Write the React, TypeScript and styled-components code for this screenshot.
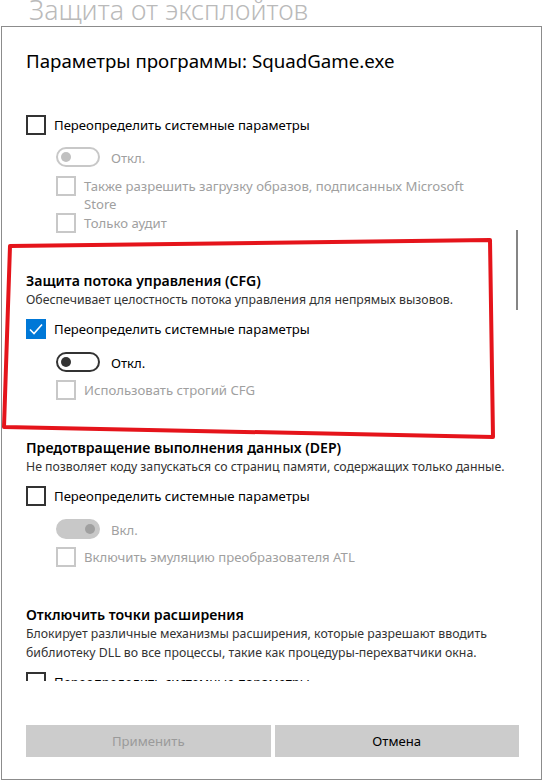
import React from "react";
import styled, { createGlobalStyle } from "styled-components";

const GlobalStyle = createGlobalStyle`
  html, body { margin: 0; padding: 0; background: #ffffff; }
  body { font-family: "Noto Sans", "Open Sans", sans-serif; color: #000; }
  * { box-sizing: border-box; }
`;

const FONT = `"Noto Sans", "Open Sans", sans-serif`;

const Page = styled.div`
  position: relative;
  width: 545px;
  height: 782px;
  overflow: hidden;
  background: #fff;
`;

const PageTitle = styled.div`
  height: 26px;
  overflow: hidden;
  display: flex;
  align-items: flex-end;
  padding-left: 29px;
  font-family: ${FONT};
  font-weight: 300;
  font-size: 26.8px;
  line-height: 30px;
  color: #bababa;
  white-space: nowrap;
  span { margin-bottom: 1px; }
`;

const Dialog = styled.div`
  position: relative;
  margin-left: 1px;
  width: 541px;
  height: 754px;
  border: 1px solid #8c8c8c;
  background: #fff;
  display: flex;
  flex-direction: column;
`;

const DialogTitle = styled.h1`
  margin: 20px 0 0 0;
  padding: 0 24px;
  font-family: ${FONT};
  font-weight: 400;
  font-size: 18.7px;
  line-height: 28px;
  color: #000;
`;

const ScrollArea = styled.div`
  position: relative;
  flex: 1;
  overflow: hidden;
`;

const ScrollContent = styled.div`
  padding: 40px 34px 0 24px;
`;

const ScrollThumb = styled.div`
  position: absolute;
  right: 23px;
  top: 155px;
  width: 2px;
  height: 80px;
  background: #858585;
`;

const Section = styled.section`
  margin-top: 39px;
`;

const Heading = styled.h2`
  margin: 0;
  font-family: ${FONT};
  font-weight: 600;
  font-size: 14.1px;
  line-height: 18px;
  color: #000;
`;

const Description = styled.p`
  margin: 0;
  font-family: ${FONT};
  font-size: 12.3px;
  line-height: 19px;
  color: #333333;
`;

const Row = styled.label<{ $gap?: number }>`
  display: flex;
  align-items: flex-start;
  gap: 8px;
  margin-top: ${(p) => p.$gap ?? 0}px;
  min-height: 20px;
`;

const Box = styled.span<{ $checked?: boolean; $disabled?: boolean }>`
  flex: none;
  width: 20px;
  height: 20px;
  border: 2px solid ${(p) => (p.$checked ? "#0078d7" : p.$disabled ? "#c8c8c8" : "#333333")};
  background: ${(p) => (p.$checked ? "#0078d7" : "#fff")};
  display: flex;
  align-items: center;
  justify-content: center;
`;

const LabelText = styled.span<{ $disabled?: boolean }>`
  padding-top: 1px;
  font-family: ${FONT};
  font-size: 13.15px;
  line-height: 18px;
  color: ${(p) => (p.$disabled ? "#a0a0a0" : "#000")};
`;

const SubGroup = styled.div`
  margin-left: 30px;
  margin-right: 8px;
`;

const ToggleRow = styled.div<{ $gap?: number }>`
  display: flex;
  align-items: center;
  gap: 11px;
  margin-top: ${(p) => p.$gap ?? 0}px;
  height: 20px;
`;

const Track = styled.span<{ $on?: boolean; $disabled?: boolean }>`
  flex: none;
  width: 44px;
  height: 20px;
  border-radius: 10px;
  border: 2px solid ${(p) => (p.$disabled ? "#c8c8c8" : "#333")};
  background: ${(p) => (p.$on ? "#c8c8c8" : "#fff")};
  display: flex;
  align-items: center;
  justify-content: ${(p) => (p.$on ? "flex-end" : "flex-start")};
  padding: 0 3px;
`;

const Knob = styled.span<{ $on?: boolean; $disabled?: boolean }>`
  width: 10px;
  height: 10px;
  border-radius: 50%;
  background: ${(p) => (p.$on ? "#a0a0a0" : p.$disabled ? "#c0c0c0" : "#333")};
`;

const Footer = styled.div`
  padding: 44px 22px 22px 24px;
  display: grid;
  grid-template-columns: 1fr 1fr;
  gap: 4px;
`;

const Button = styled.button<{ $disabled?: boolean }>`
  height: 32px;
  border: none;
  background: #cccccc;
  font-family: ${FONT};
  font-size: 13.15px;
  color: ${(p) => (p.$disabled ? "#9a9a9a" : "#000")};
  padding: 0;
`;

const Annotation = styled.svg`
  position: absolute;
  left: 0;
  top: 0;
  width: 545px;
  height: 782px;
  pointer-events: none;
`;

const Check = () => (
  <svg width="16" height="16" viewBox="0 0 16 16">
    <polyline points="2,8.5 6,12.5 14,3.5" fill="none" stroke="#fff" strokeWidth="1.6" />
  </svg>
);

const Checkbox = ({ label, checked, disabled, gap }: { label: string; checked?: boolean; disabled?: boolean; gap?: number }) => (
  <Row $gap={gap}>
    <Box $checked={checked} $disabled={disabled}>{checked && <Check />}</Box>
    <LabelText $disabled={disabled}>{label}</LabelText>
  </Row>
);

const Toggle = ({ on, disabled, gap }: { on?: boolean; disabled?: boolean; gap?: number }) => (
  <ToggleRow $gap={gap}>
    <Track $on={on} $disabled={disabled}><Knob $on={on} $disabled={disabled} /></Track>
    <LabelText $disabled={disabled}>{on ? "Вкл." : "Откл."}</LabelText>
  </ToggleRow>
);

export default function App() {
  return (
    <Page>
      <GlobalStyle />
      <PageTitle><span>Защита от эксплойтов</span></PageTitle>
      <Dialog>
        <DialogTitle>Параметры программы: SquadGame.exe</DialogTitle>
        <ScrollArea>
          <ScrollContent>
            <Checkbox label="Переопределить системные параметры" />
            <SubGroup>
              <Toggle disabled gap={12} />
              <Checkbox disabled gap={9} label="Также разрешить загрузку образов, подписанных Microsoft Store" />
              <Checkbox disabled label="Только аудит" />
            </SubGroup>

            <Section>
              <Heading>Защита потока управления (CFG)</Heading>
              <Description>Обеспечивает целостность потока управления для непрямых вызовов.</Description>
              <Checkbox checked gap={10} label="Переопределить системные параметры" />
              <SubGroup>
                <Toggle gap={13} />
                <Checkbox disabled gap={8} label="Использовать строгий CFG" />
              </SubGroup>
            </Section>

            <Section>
              <Heading>Предотвращение выполнения данных (DEP)</Heading>
              <Description>Не позволяет коду запускаться со страниц памяти, содержащих только данные.</Description>
              <Checkbox gap={10} label="Переопределить системные параметры" />
              <SubGroup>
                <Toggle on disabled gap={13} />
                <Checkbox disabled gap={8} label="Включить эмуляцию преобразователя ATL" />
              </SubGroup>
            </Section>

            <Section>
              <Heading>Отключить точки расширения</Heading>
              <Description>Блокирует различные механизмы расширения, которые разрешают вводить библиотеку DLL во все процессы, такие как процедуры-перехватчики окна.</Description>
              <Checkbox gap={10} label="Переопределить системные параметры" />
            </Section>
          </ScrollContent>
          <ScrollThumb />
        </ScrollArea>
        <Footer>
          <Button $disabled>Применить</Button>
          <Button>Отмена</Button>
        </Footer>
      </Dialog>
      <Annotation viewBox="0 0 545 782">
        <polygon points="10,246 490,240 493,437 4,427" fill="none" stroke="#e5141b" strokeWidth="4" strokeLinejoin="round" />
      </Annotation>
    </Page>
  );
}
